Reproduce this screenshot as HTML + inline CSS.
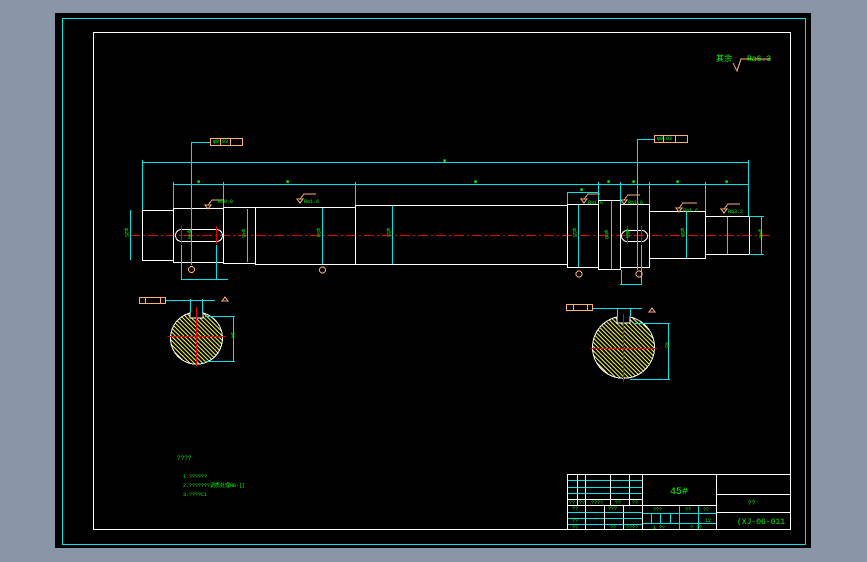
<!DOCTYPE html>
<html><head><meta charset="utf-8"><style>
html,body{margin:0;padding:0;background:#8a96a8;width:867px;height:562px;overflow:hidden}
svg{position:absolute;left:0;top:0}
text{font-family:"Liberation Mono",monospace;fill:#00ff00}
</style></head><body>
<svg width="867" height="562" viewBox="0 0 867 562" shape-rendering="crispEdges">
<defs>
<pattern id="h" width="3" height="3" patternUnits="userSpaceOnUse" patternTransform="rotate(-45)">
<line x1="0.5" y1="0" x2="0.5" y2="3" stroke="#ffff40" stroke-width="1"/></pattern>
</defs>
<rect x="55" y="13" width="756" height="535" fill="#000"/>
<rect x="62.5" y="18.5" width="743" height="526" fill="none" stroke="#00e5e5"/>
<rect x="93.5" y="32.5" width="697" height="497" fill="none" stroke="#fff"/>
<line x1="130" y1="235.5" x2="770" y2="235.5" stroke="#e00" stroke-dasharray="10,3,2,3"/>
<g fill="none" stroke="#fff">
<rect x="142.5" y="210.5" width="31" height="50"/>
<rect x="173.5" y="208.5" width="50" height="54"/>
<rect x="223.5" y="207.5" width="32" height="56"/>
<rect x="255.5" y="207.5" width="100" height="57"/>
<rect x="355.5" y="205.5" width="212" height="59"/>
<rect x="567.5" y="204.5" width="31" height="63"/>
<rect x="598.5" y="200.5" width="22" height="69"/>
<rect x="620.5" y="204.5" width="29" height="63"/>
<rect x="649.5" y="211.5" width="56" height="47"/>
<rect x="705.5" y="216.5" width="44" height="38"/>
<rect x="175.5" y="229.5" width="47" height="12" rx="6"/>
<rect x="621.5" y="230.5" width="26" height="11" rx="5.5"/>
</g>
<g stroke="#e00"><line x1="181.5" y1="226" x2="181.5" y2="244"/><line x1="216.5" y1="226" x2="216.5" y2="244"/>
<line x1="627.5" y1="226" x2="627.5" y2="244"/><line x1="641.5" y1="226" x2="641.5" y2="244"/></g>
<g stroke="#00e5e5" fill="none">
<line x1="142" y1="162.5" x2="749" y2="162.5"/>
<line x1="173" y1="184.5" x2="749" y2="184.5"/>
<line x1="142.5" y1="160" x2="142.5" y2="210"/>
<line x1="173.5" y1="182" x2="173.5" y2="208"/>
<line x1="223.5" y1="182" x2="223.5" y2="207"/>
<line x1="355.5" y1="182" x2="355.5" y2="205"/>
<line x1="598.5" y1="182" x2="598.5" y2="200"/>
<line x1="620.5" y1="182" x2="620.5" y2="204"/>
<line x1="649.5" y1="182" x2="649.5" y2="204"/>
<line x1="705.5" y1="182" x2="705.5" y2="211"/>
<line x1="748.5" y1="160" x2="748.5" y2="216"/>
<line x1="567.5" y1="192.5" x2="598" y2="192.5"/><line x1="567.5" y1="192" x2="567.5" y2="204"/>
<line x1="130.5" y1="210" x2="130.5" y2="260"/>
<line x1="761.5" y1="216" x2="761.5" y2="254"/>
<line x1="749" y1="216.5" x2="764" y2="216.5"/><line x1="749" y1="254.5" x2="764" y2="254.5"/>
<line x1="247.5" y1="209" x2="247.5" y2="262"/>
<line x1="322.5" y1="208" x2="322.5" y2="264"/>
<line x1="392.5" y1="206" x2="392.5" y2="264"/>
<line x1="578.5" y1="205" x2="578.5" y2="267"/>
<line x1="611.5" y1="201" x2="611.5" y2="269"/>
<line x1="686.5" y1="212" x2="686.5" y2="258"/>
<line x1="727.5" y1="217" x2="727.5" y2="254"/>
<line x1="191.5" y1="142" x2="191.5" y2="265"/><line x1="191" y1="142.5" x2="210" y2="142.5"/>
<line x1="637.5" y1="139" x2="637.5" y2="270"/><line x1="637" y1="139.5" x2="654" y2="139.5"/>
<line x1="181.5" y1="245" x2="181.5" y2="280"/><line x1="216.5" y1="245" x2="216.5" y2="280"/><line x1="181" y1="279.5" x2="228" y2="279.5"/>
<line x1="621.5" y1="270" x2="621.5" y2="285"/><line x1="641.5" y1="245" x2="641.5" y2="285"/><line x1="620" y1="284.5" x2="642" y2="284.5"/>
</g>
<g fill="none" stroke="#ffb070">
<rect x="210.5" y="138.5" width="32" height="7"/><line x1="220.5" y1="138" x2="220.5" y2="146"/><line x1="230.5" y1="138" x2="230.5" y2="146"/>
<rect x="654.5" y="135.5" width="33" height="7"/><line x1="663.5" y1="135" x2="663.5" y2="143"/><line x1="675.5" y1="135" x2="675.5" y2="143"/>
<rect x="139.5" y="297.5" width="26" height="6"/><line x1="145.5" y1="297" x2="145.5" y2="304"/><line x1="160.5" y1="297" x2="160.5" y2="304"/>
<rect x="566.5" y="304.5" width="26" height="6"/><line x1="573.5" y1="304" x2="573.5" y2="311"/><line x1="587.5" y1="304" x2="587.5" y2="311"/>
<circle cx="191.5" cy="269.5" r="3"/><circle cx="322.5" cy="270" r="3"/><circle cx="579" cy="274" r="3"/><circle cx="639" cy="274" r="3"/>
<path d="M205 205 l3 4 l3-4 z M297 199 l3 4 l3-4z M581 199 l3 4 l3-4z M621 200 l3 4 l3-4z M676 208 l3 4 l3-4z M721 209 l3 4 l3-4z M222 301 l3 -4 l3 4z M649 312 l3 -4 l3 4z"/>
<path d="M208 205 l4-5 h12 M300 199 l4-5 h12 M584 199 l4-5 h12 M624 200 l4-5 h12 M679 208 l4-5 h14 M724 209 l4-5 h12"/>
<path d="M733 63 l4 8 l4-12 h30" />
</g>
<g stroke="#fff" fill="url(#h)">
<path d="M190 313 A26 26 0 1 0 203 313 L203 318 L190 318 Z"/>
<path d="M617 317 A31 31 0 1 0 630 317 L630 323 L617 323 Z"/>
</g>
<g stroke="#e00"><line x1="168" y1="336.5" x2="226" y2="336.5"/><line x1="196.5" y1="307" x2="196.5" y2="366"/>
<line x1="590" y1="348.5" x2="657" y2="348.5"/><line x1="623.5" y1="314" x2="623.5" y2="382"/></g>
<g stroke="#00e5e5" fill="none">
<line x1="166" y1="300.5" x2="215" y2="300.5"/><line x1="190.5" y1="299" x2="190.5" y2="313"/><line x1="202.5" y1="299" x2="202.5" y2="313"/>
<line x1="205" y1="316.5" x2="235" y2="316.5"/><line x1="205" y1="361.5" x2="235" y2="361.5"/><line x1="233.5" y1="316" x2="233.5" y2="362"/>
<line x1="593" y1="308.5" x2="642" y2="308.5"/><line x1="617.5" y1="308" x2="617.5" y2="317"/><line x1="630.5" y1="308" x2="630.5" y2="317"/>
<line x1="633" y1="323.5" x2="670" y2="323.5"/><line x1="630" y1="379.5" x2="670" y2="379.5"/><line x1="668.5" y1="323" x2="668.5" y2="380"/>
</g>
<g font-size="5">
<text x="443" y="162">■</text><text x="286" y="183">■</text><text x="474" y="183">■</text><text x="197" y="183">■</text>
<text x="607" y="183">■</text><text x="632" y="183">■</text><text x="676" y="183">■</text><text x="725" y="183">■</text><text x="580" y="191">■</text>
<text x="218" y="203">Ra0.8</text><text x="304" y="203">Ra1.6</text><text x="588" y="204">Ra1.6</text><text x="628" y="204">Ra1.6</text><text x="683" y="212">Ra1.6</text><text x="728" y="213">Ra3.2</text>
<text x="213" y="143">φ0.03</text><text x="657" y="140">φ0.03</text>
</g>
<g font-size="5" writing-mode="tb">
<text x="126" y="228">φ35</text><text x="189" y="230">φ40</text><text x="243" y="229">φ45</text><text x="318" y="228">φ50</text><text x="388" y="228">φ55</text>
<text x="574" y="228">φ55</text><text x="606" y="230">φ60</text><text x="627" y="229">φ55</text><text x="682" y="228">φ50</text><text x="760" y="229">φ40</text><text x="232" y="332">34</text><text x="666" y="342">45</text>
</g>
<text x="716" y="61" font-size="8">其余</text><text x="747" y="61" font-size="8">Ra6.3</text>
<text x="177" y="460" font-size="6">????</text>
<text x="183" y="478" font-size="5">1.??????</text>
<text x="183" y="487" font-size="5">2.???????调质处理HB-[]</text>
<text x="183" y="496" font-size="5">3.????C1</text>
<g stroke="#00e5e5" fill="none">
<line x1="567" y1="480.5" x2="642" y2="480.5"/><line x1="567" y1="487.5" x2="642" y2="487.5"/><line x1="567" y1="493.5" x2="642" y2="493.5"/>
<line x1="567" y1="512.5" x2="642" y2="512.5"/><line x1="567" y1="518.5" x2="642" y2="518.5"/><line x1="567" y1="524.5" x2="642" y2="524.5"/>
<line x1="642" y1="513.5" x2="716" y2="513.5"/><line x1="642" y1="523.5" x2="716" y2="523.5"/>
<line x1="679.5" y1="505" x2="679.5" y2="530"/><line x1="698.5" y1="505" x2="698.5" y2="530"/>
<line x1="651.5" y1="513" x2="651.5" y2="523"/><line x1="660.5" y1="513" x2="660.5" y2="523"/><line x1="670.5" y1="513" x2="670.5" y2="523"/>
</g>
<g stroke="#fff" fill="none">
<rect x="567.5" y="474.5" width="223" height="55"/>
<line x1="642.5" y1="474" x2="642.5" y2="530"/><line x1="716.5" y1="474" x2="716.5" y2="530"/>
<line x1="577.5" y1="474" x2="577.5" y2="505"/><line x1="585.5" y1="474" x2="585.5" y2="530"/><line x1="610.5" y1="474" x2="610.5" y2="505"/><line x1="629.5" y1="474" x2="629.5" y2="505"/>
<line x1="604.5" y1="505" x2="604.5" y2="530"/><line x1="623.5" y1="505" x2="623.5" y2="530"/>
<line x1="567" y1="499.5" x2="642" y2="499.5"/><line x1="567" y1="505.5" x2="716" y2="505.5"/>
<line x1="716" y1="494.5" x2="791" y2="494.5"/><line x1="716" y1="512.5" x2="791" y2="512.5"/>
</g>
<g font-size="5">
<text x="569" y="504">??</text><text x="579" y="504">??</text><text x="591" y="504">????</text><text x="615" y="504">??</text><text x="632" y="504">??</text>
<text x="572" y="510">??</text><text x="608" y="510">???</text><text x="572" y="522">??</text><text x="610" y="529">??</text><text x="572" y="529">??</text><text x="626" y="529">????</text>
<text x="653" y="511">???</text><text x="685" y="511">??</text><text x="703" y="511">??</text><text x="705" y="522">12</text><text x="653" y="529">1 ??</text><text x="690" y="529">? ??</text>
</g>
<text x="670" y="494" font-size="10">45#</text>
<text x="748" y="505" font-size="6">??</text>
<text x="737" y="524" font-size="8">(XJ-06-011</text>
</svg>
</body></html>
